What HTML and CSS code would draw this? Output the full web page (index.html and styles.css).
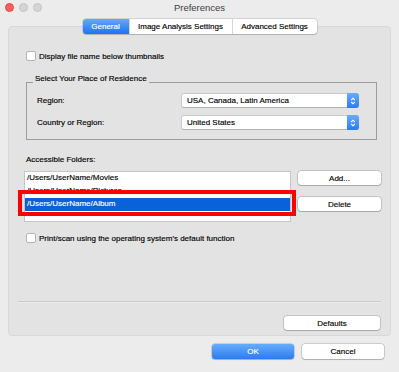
FILE: index.html
```html
<!DOCTYPE html>
<html lang="en">
<head>
    <meta charset="UTF-8">
    <meta name="viewport" content="width=device-width, initial-scale=1.0">
    <title>Preferences</title>
<link rel="stylesheet" href="styles.css">
</head>
<body>

    <div class="window">

        <header class="titlebar">
            <div class="lights">
                <span class="light close"></span>
                <span class="light"></span>
                <span class="light"></span>
            </div>
            <div class="title">Preferences</div>
            <div></div>
        </header>

        <main class="panel">

            <nav class="tabs">
                <span class="tab tab-general active">General</span>
                <span class="tab tab-analysis">Image Analysis Settings</span>
                <span class="tab tab-advanced">Advanced Settings</span>
            </nav>

            <label class="check-row check-top">
                <span class="checkbox"></span>
                Display file name below thumbnails
            </label>

            <section class="group">
                <span class="group-title">Select Your Place of Residence</span>

                <div class="field-row">
                    <span class="field-label">Region:</span>
                    <div class="select">
                        <span>USA, Canada, Latin America</span>
                        <span class="stepper">
                            <svg width="6" height="10" viewBox="0 0 6 10"><path d="M1.2 4 L3 2.2 L4.8 4 M1.2 6 L3 7.8 L4.8 6" /></svg>
                        </span>
                    </div>
                </div>

                <div class="field-row">
                    <span class="field-label">Country or Region:</span>
                    <div class="select">
                        <span>United States</span>
                        <span class="stepper">
                            <svg width="6" height="10" viewBox="0 0 6 10"><path d="M1.2 4 L3 2.2 L4.8 4 M1.2 6 L3 7.8 L4.8 6" /></svg>
                        </span>
                    </div>
                </div>
            </section>

            <p class="folders-label">Accessible Folders:</p>

            <div class="folders">
                <ul class="folder-list">
                    <li>/Users/UserName/Movies</li>
                    <li>/Users/UserName/Pictures</li>
                    <li class="selected">/Users/UserName/Album</li>
                </ul>
                <div class="folder-buttons">
                    <button class="btn">Add...</button>
                    <button class="btn">Delete</button>
                </div>
                <!-- red callout drawn over the selected folder -->
                <div class="callout"></div>
            </div>

            <label class="check-row check-print">
                <span class="checkbox"></span>
                Print/scan using the operating system's default function
            </label>

            <div class="panel-footer">
                <div class="separator"></div>
                <button class="btn btn-defaults">Defaults</button>
            </div>

        </main>

        <footer class="dialog-buttons">
            <button class="btn btn-primary">OK</button>
            <button class="btn">Cancel</button>
        </footer>

    </div>

</body>
</html>
```

FILE: styles.css
```css
*,*::before,*::after {
    box-sizing: border-box;
    margin: 0;
    padding: 0;
}

body {
    background-color: #ececec;
    color: #000;
    font-family: 'Liberation Sans', Arial, sans-serif;
    font-size: 8px;
    -webkit-text-stroke: 0.15px;
}

.window {
    width: 399px;
    height: 372px;
    overflow: hidden;
}

/* title bar */
.titlebar {
    height: 19px;
    display: grid;
    grid-template-columns: 1fr auto 1fr;
    align-items: start;
}

.lights {
    display: flex;
    gap: 5px;
    padding: 3px 0 0 5px;
}

.light {
    width: 9px;
    height: 9px;
    border-radius: 50%;
    background-color: #d5d5d5;
    border: 0.5px solid #c3c3c3;
}

.light.close {
    background-color: #fc605c;
    border-color: #df4a44;
}

.title {
    font-size: 9.5px;
    line-height: 15px;
    color: #3e3e3e;
    -webkit-text-stroke: 0;
}

/* tab panel */
.panel {
    margin: 7px 8px 0;
    height: 310px;
    background-color: #e3e3e3;
    border: 1px solid #d8d8d8;
    border-radius: 4px;
    padding: 0 9px 5px;
    display: flex;
    flex-direction: column;
}

.tabs {
    align-self: center;
    margin-top: -8px;
    height: 15px;
    display: flex;
    background-color: #fff;
    border-radius: 3px;
    box-shadow: 0 0 0 0.5px rgba(0, 0, 0, 0.22), 0 1px 1px rgba(0, 0, 0, 0.12);
}

.tab {
    display: flex;
    align-items: center;
    justify-content: center;
    border-left: 1px solid #d6d6d6;
}

.tab-general {
    width: 46px;
    border-left: none;
}

.tab-analysis {
    width: 103px;
}

.tab-advanced {
    width: 85px;
}

.tab.active {
    background: linear-gradient(#62a9fb, #1f73f1);
    color: white;
    border-radius: 3px 0 0 3px;
}

/* checkboxes */
.check-row {
    display: flex;
    align-items: center;
    gap: 3px;
    height: 10px;
    margin-left: 8px;
}

.check-top {
    margin-top: 17px;
}

.check-print {
    margin-top: 11px;
}

.checkbox {
    width: 10px;
    height: 10px;
    background-color: #fff;
    border: 1px solid #b4b4b4;
    border-radius: 2px;
}

/* place of residence box */
.group {
    position: relative;
    margin: 21px 4px 0 8px;
    border: 1px solid #9c9c9c;
    padding: 10px 17px 9px 10px;
    display: flex;
    flex-direction: column;
    gap: 7px;
}

.group-title {
    position: absolute;
    top: -9px;
    left: 6px;
    padding: 0 2px;
    line-height: 10px;
    background-color: #e3e3e3;
}

.field-row {
    display: flex;
    align-items: center;
    height: 15px;
}

.field-label {
    width: 144px;
}

.select {
    flex: 1;
    height: 15px;
    display: flex;
    align-items: center;
    padding-left: 5px;
    background-color: #fff;
    border: 1px solid #c9c9c9;
    border-bottom-color: #b2b2b2;
    border-radius: 3px;
}

.stepper {
    margin: -1px -1px -1px auto;
    align-self: stretch;
    width: 12px;
    display: flex;
    align-items: center;
    justify-content: center;
    background: linear-gradient(#67acfb, #2a7cf4);
    border-radius: 0 3px 3px 0;
}

.stepper path {
    fill: none;
    stroke: white;
    stroke-width: 1.1;
}

/* folders */
.folders-label {
    margin: 15px 0 0 8px;
    line-height: 10px;
}

.folders {
    position: relative;
    margin-top: 6px;
    height: 51px;
    display: flex;
}

.folder-list {
    list-style: none;
    margin-left: 6px;
    width: 267px;
    background-color: #fff;
    border: 1px solid #c5c5c5;
}

.folder-list li {
    height: 13px;
    line-height: 12px;
    padding-left: 2px;
}

.folder-list li.selected {
    background-color: #0a62d9;
    color: white;
}

.folder-buttons {
    margin-left: 7px;
    width: 83px;
    display: flex;
    flex-direction: column;
    gap: 12px;
}

.callout {
    position: absolute;
    left: 0;
    top: 19px;
    width: 278px;
    height: 26px;
    border: 4px solid #ff0000;
}

/* buttons */
.btn {
    height: 14px;
    background-color: #fff;
    border: none;
    border-radius: 3px;
    box-shadow: 0 0 0 0.5px rgba(0, 0, 0, 0.28), 0 1px 1px rgba(0, 0, 0, 0.14);
    font-family: inherit;
    font-size: 8px;
    color: #000;
}

.btn-primary {
    background: linear-gradient(#67acfb, #2a7cf4);
    color: white;
}

.panel-footer {
    margin-top: auto;
    display: flex;
    flex-direction: column;
}

.separator {
    height: 2px;
    border-top: 1px solid #cacaca;
    border-bottom: 1px solid #ececec;
}

.btn-defaults {
    align-self: flex-end;
    margin: 13px 1px 0 0;
    width: 96px;
}

.dialog-buttons {
    margin-top: 8px;
    padding-right: 15px;
    display: flex;
    justify-content: flex-end;
    gap: 8px;
}

.dialog-buttons .btn {
    width: 82px;
    height: 15px;
}
```
